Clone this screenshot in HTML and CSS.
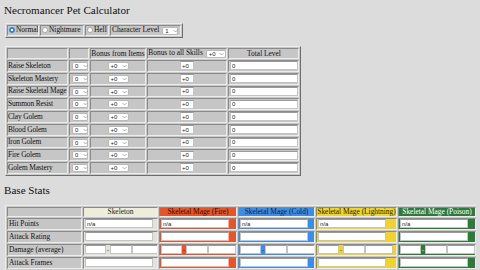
FILE: index.html
```html
<!DOCTYPE html>
<html>
<head>
<meta charset="utf-8">
<title>Necromancer Pet Calculator</title>
<link rel="stylesheet" href="styles.css">
</head>
<body>
<h1 class="title">Necromancer Pet Calculator</h1>

<table class="grid opts">
  <tr>
    <td class="o1"><label class="radio"><input type="radio" name="diff" checked>Normal</label></td>
    <td class="o2"><label class="radio"><input type="radio" name="diff">Nightmare</label></td>
    <td class="o3"><label class="radio"><input type="radio" name="diff">Hell</label></td>
    <td class="o4">Character Level <span class="sel sel-lvl"><select><option>1</option></select><svg viewBox="0 0 8 5"><path d="M1 1l3 3 3-3"/></svg></span></td>
  </tr>
</table>

<table class="grid skills">
  <tr class="head">
    <td class="c1"></td>
    <td class="c2"></td>
    <td class="c3">Bonus from Items</td>
    <td class="c4 allsk">Bonus to all Skills <span class="sel sel-h"><select><option>+0</option></select><svg viewBox="0 0 8 5"><path d="M1 1l3 3 3-3"/></svg></span></td>
    <td class="c5">Total Level</td>
  </tr>
  <tr><td class="c1">Raise Skeleton</td><td class="c2"><span class="sel sel-s"><select><option>0</option></select><svg viewBox="0 0 8 5"><path d="M1 1l3 3 3-3"/></svg></span></td><td class="c3"><span class="sel sel-b"><select><option>+0</option></select><svg viewBox="0 0 8 5"><path d="M1 1l3 3 3-3"/></svg></span></td><td class="c4"><input class="box small" value="+0"></td><td class="c5"><input class="box total" value="0"></td></tr>
  <tr><td class="c1">Skeleton Mastery</td><td class="c2"><span class="sel sel-s"><select><option>0</option></select><svg viewBox="0 0 8 5"><path d="M1 1l3 3 3-3"/></svg></span></td><td class="c3"><span class="sel sel-b"><select><option>+0</option></select><svg viewBox="0 0 8 5"><path d="M1 1l3 3 3-3"/></svg></span></td><td class="c4"><input class="box small" value="+0"></td><td class="c5"><input class="box total" value="0"></td></tr>
  <tr><td class="c1">Raise Skeletal Mage</td><td class="c2"><span class="sel sel-s"><select><option>0</option></select><svg viewBox="0 0 8 5"><path d="M1 1l3 3 3-3"/></svg></span></td><td class="c3"><span class="sel sel-b"><select><option>+0</option></select><svg viewBox="0 0 8 5"><path d="M1 1l3 3 3-3"/></svg></span></td><td class="c4"><input class="box small" value="+0"></td><td class="c5"><input class="box total" value="0"></td></tr>
  <tr><td class="c1">Summon Resist</td><td class="c2"><span class="sel sel-s"><select><option>0</option></select><svg viewBox="0 0 8 5"><path d="M1 1l3 3 3-3"/></svg></span></td><td class="c3"><span class="sel sel-b"><select><option>+0</option></select><svg viewBox="0 0 8 5"><path d="M1 1l3 3 3-3"/></svg></span></td><td class="c4"><input class="box small" value="+0"></td><td class="c5"><input class="box total" value="0"></td></tr>
  <tr><td class="c1">Clay Golem</td><td class="c2"><span class="sel sel-s"><select><option>0</option></select><svg viewBox="0 0 8 5"><path d="M1 1l3 3 3-3"/></svg></span></td><td class="c3"><span class="sel sel-b"><select><option>+0</option></select><svg viewBox="0 0 8 5"><path d="M1 1l3 3 3-3"/></svg></span></td><td class="c4"><input class="box small" value="+0"></td><td class="c5"><input class="box total" value="0"></td></tr>
  <tr><td class="c1">Blood Golem</td><td class="c2"><span class="sel sel-s"><select><option>0</option></select><svg viewBox="0 0 8 5"><path d="M1 1l3 3 3-3"/></svg></span></td><td class="c3"><span class="sel sel-b"><select><option>+0</option></select><svg viewBox="0 0 8 5"><path d="M1 1l3 3 3-3"/></svg></span></td><td class="c4"><input class="box small" value="+0"></td><td class="c5"><input class="box total" value="0"></td></tr>
  <tr><td class="c1">Iron Golem</td><td class="c2"><span class="sel sel-s"><select><option>0</option></select><svg viewBox="0 0 8 5"><path d="M1 1l3 3 3-3"/></svg></span></td><td class="c3"><span class="sel sel-b"><select><option>+0</option></select><svg viewBox="0 0 8 5"><path d="M1 1l3 3 3-3"/></svg></span></td><td class="c4"><input class="box small" value="+0"></td><td class="c5"><input class="box total" value="0"></td></tr>
  <tr><td class="c1">Fire Golem</td><td class="c2"><span class="sel sel-s"><select><option>0</option></select><svg viewBox="0 0 8 5"><path d="M1 1l3 3 3-3"/></svg></span></td><td class="c3"><span class="sel sel-b"><select><option>+0</option></select><svg viewBox="0 0 8 5"><path d="M1 1l3 3 3-3"/></svg></span></td><td class="c4"><input class="box small" value="+0"></td><td class="c5"><input class="box total" value="0"></td></tr>
  <tr><td class="c1">Golem Mastery</td><td class="c2"><span class="sel sel-s"><select><option>0</option></select><svg viewBox="0 0 8 5"><path d="M1 1l3 3 3-3"/></svg></span></td><td class="c3"><span class="sel sel-b"><select><option>+0</option></select><svg viewBox="0 0 8 5"><path d="M1 1l3 3 3-3"/></svg></span></td><td class="c4"><input class="box small" value="+0"></td><td class="c5"><input class="box total" value="0"></td></tr>
</table>

<h2 class="sub">Base Stats</h2>

<table class="grid stats">
  <tr class="shead">
    <td class="lab"></td>
    <td class="sk">Skeleton</td>
    <td class="fire">Skeletal Mage (Fire)</td>
    <td class="cold">Skeletal Mage (Cold)</td>
    <td class="light">Skeletal Mage (Lightning)</td>
    <td class="pois">Skeletal Mage (Poison)</td>
  </tr>
  <tr>
    <td class="lab">Hit Points</td>
    <td class="sk"><input class="box stat" value="n/a"></td>
    <td class="fire"><input class="box stat" value="n/a"></td>
    <td class="cold"><input class="box stat" value="n/a"></td>
    <td class="light"><input class="box stat" value="n/a"></td>
    <td class="pois"><input class="box stat" value="n/a"></td>
  </tr>
  <tr>
    <td class="lab">Attack Rating</td>
    <td class="sk"><input class="box stat" value=""></td>
    <td class="fire"><input class="box stat" value=""></td>
    <td class="cold"><input class="box stat" value=""></td>
    <td class="light"><input class="box stat" value=""></td>
    <td class="pois"><input class="box stat" value=""></td>
  </tr>
  <tr>
    <td class="lab">Damage (average)</td>
    <td class="sk"><span class="dmg"><input class="box d1"><span class="dash">-</span><input class="box d2"><input class="box d3"></span></td>
    <td class="fire"><span class="dmg"><input class="box d1"><span class="dash">-</span><input class="box d2"><input class="box d3"></span></td>
    <td class="cold"><span class="dmg"><input class="box d1"><span class="dash">-</span><input class="box d2"><input class="box d3"></span></td>
    <td class="light"><span class="dmg"><input class="box d1"><span class="dash">-</span><input class="box d2"><input class="box d3"></span></td>
    <td class="pois"><span class="dmg"><input class="box d1"><span class="dash">-</span><input class="box d2"><input class="box d3"></span></td>
  </tr>
  <tr>
    <td class="lab">Attack Frames</td>
    <td class="sk"><input class="box stat" value=""></td>
    <td class="fire"><input class="box stat" value=""></td>
    <td class="cold"><input class="box stat" value=""></td>
    <td class="light"><input class="box stat" value=""></td>
    <td class="pois"><input class="box stat" value=""></td>
  </tr>
  <tr>
    <td class="lab"></td>
    <td class="sk"><input class="box stat" value=""></td>
    <td class="fire"><input class="box stat" value=""></td>
    <td class="cold"><input class="box stat" value=""></td>
    <td class="light"><input class="box stat" value=""></td>
    <td class="pois"><input class="box stat" value=""></td>
  </tr>
</table>
</body>
</html>
```

FILE: styles.css
```css
html { background: #dcdcdc; }
body {
  margin: 4px;
  font-family: "Liberation Serif", "Times New Roman", serif;
  font-size: 7.4px;
  color: #111;
}
.title, .sub {
  font-family: "Liberation Serif", "Times New Roman", serif;
  font-size: 11.1px;
  font-weight: normal;
  line-height: 13px;
}
.title { margin: 0 0 6px 0; }
.sub { margin: 8px 0 8px 0; }
.grid {
  table-layout: fixed;
  border-collapse: separate;
  border-spacing: 1px;
  border: 1px solid;
  border-color: #ececec #6d6d6d #6d6d6d #ececec;
  background: #c9c9c9;
  margin-left: 1px;
}
.grid td {
  box-sizing: border-box;
  border: 1px solid;
  border-color: #8a8a8a #ededed #ededed #8a8a8a;
  background: #c6c6c6;
  padding: 0 0 0 1px;
  line-height: 8px;
  white-space: nowrap;
  overflow: hidden;
  vertical-align: middle;
}
/* options */
.opts { width: 178px; }
.opts tr { height: 11px; }
.opts td { padding: 0; }
.o1 { width: 32px; }
.o2 { width: 44px; }
.o3 { width: 24px; }
.o4 { width: 71px; padding-left: 1px !important; }
.radio { display: inline-flex; align-items: center; }
.radio input {
  appearance: none;
  -webkit-appearance: none;
  flex: none;
  width: 6px;
  height: 6px;
  margin: 0 1px 0 1px;
  border-radius: 50%;
  border: 1px solid #a9a9a9;
  background: #fff;
}
.radio input:checked {
  border-color: #2f7de1;
  background: radial-gradient(circle, #fff 0 1px, #2f7de1 1.2px);
}
/* select look */
.sel {
  box-sizing: border-box;
  display: inline-flex;
  align-items: center;
  justify-content: space-between;
  background: #fff;
  border: 1px solid #b9b9b9;
  border-radius: 2px;
  height: 8px;
  padding: 0 1px 0 2px;
  vertical-align: middle;
}
.sel select {
  appearance: none;
  -webkit-appearance: none;
  flex: none;
  width: 8px;
  border: 0;
  background: transparent;
  padding: 0;
  margin: 0;
  font: 6px "Liberation Sans", Arial, sans-serif;
  color: #222;
  height: 6px;
  line-height: 6px;
}
.sel svg {
  flex: none;
  width: 5px;
  height: 4px;
  fill: none;
  stroke: #8a8a8a;
  stroke-width: 1.1;
}
.sel-lvl { width: 16px; margin-left: 1px; }
.sel-s { width: 16px; }
.sel-b { width: 21px; }
.sel-h { width: 20px; margin-left: 1px; }
/* skills */
.skills { width: 296px; margin-top: 8px; }
.skills tr { height: 11.75px; }
.skills tr.head { height: 11px; }
.c1 { width: 61px; padding: 0 !important; letter-spacing: -0.12px; }
.c2 { width: 20px; padding-left: 2px !important; }
.c3 { width: 56px; text-align: center; padding: 0 !important; }
.c4 { width: 80px; text-align: center; padding: 0 !important; }
.c5 { width: 71px; }
.head .c5 { text-align: center; }
.box {
  box-sizing: border-box;
  border: 1px solid #c4c4c4;
  border-top-color: #9a9a9a;
  background: #fff;
  font: 6px "Liberation Sans", Arial, sans-serif;
  color: #222;
  padding: 0 1px;
  margin: 0;
  height: 9px;
  vertical-align: middle;
  outline: none;
}
.small { width: 14px; }
.total { width: 68px; }
/* stats */
.stats { width: 473px; }
.stats tr { height: 12px; }
.stats tr.shead { height: 10px; }
.stats td { padding: 0 0 0 1px; }
.stats .shead td { text-align: center; padding: 0; }
.lab { width: 75px; }
.sk { width: 75px; background: #e2e2da !important; }
.shead .sk { background: #eeedd9 !important; color: #222; }
.fire { width: 78px; background: #e5552a !important; color: #3a0a00; }
.cold { width: 77px; background: #3b8de6 !important; color: #0b1f4a; }
.light { width: 81px; background: #efd431 !important; color: #2a2300; }
.pois { width: 78px; background: #2c7b3b !important; color: #fff; }
.stat { width: 68px; }
.dmg { display: inline-flex; align-items: center; vertical-align: middle; }
.dmg .box { flex: none; }
.d1 { width: 21px; }
.d2 { width: 22px; }
.d3 { width: 28px; }
.dash { width: 4px; text-align: center; font-size: 6px; }
```
